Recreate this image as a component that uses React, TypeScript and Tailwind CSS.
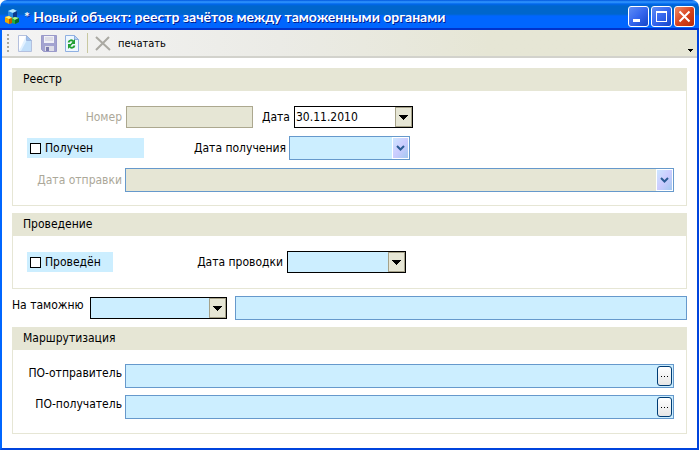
import type { ReactNode } from "react";

function AppLogo() {
  return (
    <svg width="16" height="16" viewBox="0 0 16 16" aria-hidden="true">
      <path d="M4 2 9 0l4 2v6l-4 2-5-2z" fill="#2a8ae0" />
      <path d="M4 2 9 0l4 2-4 2z" fill="#b4e8ff" />
      <path d="M9 4l4-2v6l-4 2z" fill="#0b3a8c" />
      <path d="M1 8l4-1 3 2v5l-3 1-4-2z" fill="#f0a800" />
      <path d="M1 8l4-1 3 2-3 1z" fill="#fff27a" />
      <path d="M5 10l3-1v5l-3 1z" fill="#c45a00" />
      <path d="M8 9l3-1 4 1v4l-4 2-3-1z" fill="#23b040" />
      <path d="M8 9l3-1 4 1-4 2z" fill="#a8f498" />
      <path d="M11 11l4-2v4l-4 2z" fill="#0b6a2a" />
    </svg>
  );
}

function NewIcon() {
  return (
    <svg width="14" height="17" viewBox="0 0 14 17" aria-hidden="true">
      <path d="M.5.5h8l5 5v11H.5z" fill="#e2f1ff" stroke="#b4c0de" />
      <path d="M9 5 13 6v10H3z" fill="#c2dffa" />
      <path d="M1 1h7L3 12 1 15z" fill="#fff" />
      <path d="M8.500 .5v5h5z" fill="#9cc0ee" stroke="#9fb6dd" />
    </svg>
  );
}

function SaveIcon() {
  return (
    <svg width="16" height="17" viewBox="0 0 16 17" aria-hidden="true">
      <path d="M.5.5h15v16h-13l-2-2z" fill="#a3a3d0" stroke="#9a9aca" />
      <path d="M3 1h10v7H3z" fill="#f1f1f7" />
      <path d="M4 3h8M4 5h8" stroke="#c9c9d6" />
      <path d="M4 11h9v5H4z" fill="#dedee8" />
      <path d="M5 12h3v4H5z" fill="#7c7cae" />
    </svg>
  );
}

function RefreshIcon() {
  return (
    <svg width="14" height="17" viewBox="0 0 14 17" aria-hidden="true">
      <path d="M.5.5h9l4 4v12H.5z" fill="#eef7ff" stroke="#8fb0e2" />
      <path d="M9.500 .5v4h4z" fill="#b8d4f4" stroke="#8fb0e2" />
      <path d="M3.500 7.500C4 5 7 4.500 8.500 6.500M9.500 10.500C9 13 6 13.500 4.500 11.500" stroke="#22a034" strokeWidth="1.800" fill="none" />
      <path d="M10 4v5H5.500zM3 14V9h4.500z" fill="#22a034" />
    </svg>
  );
}

function DeleteIcon() {
  return (
    <svg width="16" height="15" viewBox="0 0 16 15" aria-hidden="true">
      <path d="M1 1l14 13M14 1 1 14" stroke="#aaa9a2" strokeWidth="2" fill="none" />
    </svg>
  );
}

function DownTriangle() {
  return (
    <svg width="9" height="5" viewBox="0 0 9 5" shapeRendering="crispEdges" aria-hidden="true">
      <path d="M0 0h9v1H8v1H7v1H6v1H5v1H4V4H3V3H2V2H1V1H0z" fill="#000" />
    </svg>
  );
}

function WindowButton({ label, danger, children }: { label: string; danger?: boolean; children: ReactNode }) {
  return (
    <button
      type="button"
      aria-label={label}
      className={`flex size-[21px] items-center justify-center rounded-[3px] border border-white ${
        danger
          ? "bg-linear-to-br from-[#ee8a66] via-[#d9431c] to-[#b82c08]"
          : "bg-linear-to-br from-[#5f8cf5] via-[#3566ee] to-[#1445c8]"
      }`}
    >
      <svg width="19" height="19" viewBox="0 0 19 19" fill="none" aria-hidden="true">
        {children}
      </svg>
    </button>
  );
}

type ComboProps = {
  id: string;
  width: string;
  value?: string;
  variant: "classic" | "themed";
  fill: string;
  disabled?: boolean;
};

function Combo({ id, width, value = "", variant, fill, disabled }: ComboProps) {
  const classic = variant === "classic";
  return (
    <div className={`relative ${width}`}>
      <select
        id={id}
        disabled={disabled}
        defaultValue={value}
        className={`block w-full appearance-none rounded-none border pl-px text-black opacity-100 outline-none ${fill} ${
          classic ? "h-[22px] border-black" : "h-6 border-[#6699cc]"
        }`}
      >
        <option value={value}>{value}</option>
      </select>
      {classic ? (
        <span className="pointer-events-none absolute inset-y-px right-px flex w-[17px] items-center justify-center border border-[#a5a188] bg-[#e6e6d5]">
          <DownTriangle />
        </span>
      ) : (
        <span className="pointer-events-none absolute inset-y-px right-px flex w-[17px] items-center justify-center border border-white bg-linear-to-br from-[#cce6ff] via-[#ccccff] to-[#a3c8f0]">
          <svg width="9" height="6" viewBox="0 0 9 6" aria-hidden="true">
            <path d="M1 1l3.500 3.500L8 1" fill="none" stroke="#2b5c94" strokeWidth="2" />
          </svg>
        </span>
      )}
    </div>
  );
}

function Panel({ title, body, children }: { title: string; body: string; children: ReactNode }) {
  return (
    <section>
      <h2 className="h-[23px] bg-[#e6e6d5] pl-[11px] leading-[23px]">{title}</h2>
      <div className={`flex flex-col border border-t-0 border-[#e6e6d5] pr-3 ${body}`}>{children}</div>
    </section>
  );
}

function CheckField({ label, width }: { label: string; width: string }) {
  return (
    <label className={`ml-[14px] flex h-5 items-center gap-1 bg-[#cceeff] pl-[3px] ${width}`}>
      <input type="checkbox" className="size-[11px] appearance-none border border-black bg-white checked:bg-black" />
      {label}
    </label>
  );
}

function LookupField({ id, label }: { id: string; label: string }) {
  return (
    <div className="flex">
      <label htmlFor={id} className="w-[112px] shrink-0 pr-[3px] text-right leading-[18px]">
        {label}
      </label>
      <div className="flex h-6 min-w-0 flex-1 items-center border border-[#6699cc] bg-[#cceeff] pr-px">
        <input id={id} type="text" className="h-full min-w-0 flex-1 bg-transparent px-1 outline-none" />
        <button
          type="button"
          aria-label={`Выбрать: ${label}`}
          className="flex h-5 w-[15px] items-center justify-center rounded-[3px] border border-[#003c74] bg-linear-to-b from-white to-[#e6e6e6]"
        >
          <svg width="7" height="1" viewBox="0 0 7 1" shapeRendering="crispEdges" aria-hidden="true">
            <path d="M0 0h1v1H0zM3 0h1v1H3zM6 0h1v1H6z" fill="#000" />
          </svg>
        </button>
      </div>
    </div>
  );
}

export default function App() {
  return (
    <div className="flex min-h-screen flex-col bg-white font-['DejaVu_Sans_Condensed','DejaVu_Sans',sans-serif] text-[12px] text-black">
      <header className="flex h-[30px] items-center rounded-t-[7px] bg-[linear-gradient(#0055dd_0px,#3399ff_2px,#0066ee_4px,#0066cc_6px,#0066cc_14px,#0066ff_16px,#0066ff_28px,#0033cc_28px)] pt-[3px] pr-1 pl-1">
        <AppLogo />
        <h1 className="min-w-0 flex-1 truncate pl-1 font-[Lato,'Noto_Sans',sans-serif] text-[14px] font-bold text-white [text-shadow:1px_1px_0_#002090]">
          * Новый объект: реестр зачётов между таможенными органами
        </h1>
        <div className="flex gap-[2px]">
          <WindowButton label="Свернуть">
            <path d="M4 12h7v3H4z" fill="#fff" />
          </WindowButton>
          <WindowButton label="Развернуть">
            <path d="M4 4h11v11H4z M5 6v8h9V6z" fill="#fff" fillRule="evenodd" />
          </WindowButton>
          <WindowButton label="Закрыть" danger>
            <path d="M4.500 4.500l10 10M14.500 4.500l-10 10" stroke="#fff" strokeWidth="2" />
          </WindowButton>
        </div>
      </header>

      <div className="flex flex-1 flex-col border-x-2 border-b-2 border-l-[#0066ff] border-r-[#0044dd] border-b-[#0044dd]">
        <div
          role="toolbar"
          className="flex h-7 items-center border-b-2 border-[#d2d2cc] bg-linear-to-r from-[#f4f4f4] via-[#ebebe6] via-40% to-[#e6e6d5] to-70% pr-1 pl-[5px]"
        >
          <svg width="2" height="18" viewBox="0 0 2 18" className="mr-[9px]" shapeRendering="crispEdges" aria-hidden="true">
            <path d="M1 0v18" stroke="#a8a89c" strokeWidth="2" strokeDasharray="2 2" />
          </svg>
          <button type="button" aria-label="Создать" className="mr-[9px]">
            <NewIcon />
          </button>
          <button type="button" aria-label="Сохранить" className="mr-2">
            <SaveIcon />
          </button>
          <button type="button" aria-label="Обновить">
            <RefreshIcon />
          </button>
          <span className="mr-[7px] ml-2 h-5 w-px bg-[#c8c8a0]" />
          <button type="button" aria-label="Удалить" className="mr-[7px]">
            <DeleteIcon />
          </button>
          <button type="button" className="pt-[3px] text-[11px]">
            печатать
          </button>
          <button type="button" aria-label="Параметры панели" className="ml-auto self-end pb-1">
            <svg width="5" height="3" viewBox="0 0 5 3" shapeRendering="crispEdges" aria-hidden="true">
              <path d="M0 0h5v1H4v1H3v1H2V2H1V1H0z" fill="#000" />
            </svg>
          </button>
        </div>

        <main className="flex flex-col gap-[7px] px-[10px] pt-[10px] pb-[14px]">
          <Panel title="Реестр" body="gap-2 pt-[15px] pb-[13px]">
            <div className="flex items-center">
              <label htmlFor="number" className="w-[113px] pr-1 text-right text-[#aca899]">
                Номер
              </label>
              <input
                id="number"
                type="text"
                disabled
                className="h-[22px] w-[127px] border border-[#aca88f] bg-[#e6e6d5] px-1"
              />
              <label htmlFor="date" className="w-[41px] pr-1 text-right">
                Дата
              </label>
              <Combo id="date" width="w-[119px]" value="30.11.2010" variant="classic" fill="bg-white" />
            </div>
            <div className="flex items-center">
              <CheckField label="Получен" width="w-[117px]" />
              <label htmlFor="received" className="w-[145px] pr-[3px] text-right">
                Дата получения
              </label>
              <Combo id="received" width="w-[121px]" variant="themed" fill="bg-[#cceeff]" />
            </div>
            <div className="flex items-center">
              <label htmlFor="sent" className="w-[112px] shrink-0 pr-[3px] text-right text-[#aca899]">
                Дата отправки
              </label>
              <Combo id="sent" width="min-w-0 flex-1" variant="themed" fill="bg-[#e6e6d5]" disabled />
            </div>
          </Panel>

          <Panel title="Проведение" body="pt-[15px] pb-[15px]">
            <div className="flex items-center">
              <CheckField label="Проведён" width="w-[86px]" />
              <label htmlFor="posted" className="w-[174px] pr-1 text-right">
                Дата проводки
              </label>
              <Combo id="posted" width="w-[119px]" variant="classic" fill="bg-[#cceeff]" />
            </div>
          </Panel>

          <div className="flex items-center">
            <label htmlFor="customs" className="w-[78px] shrink-0 self-start leading-[18px] whitespace-nowrap">
              На таможню
            </label>
            <Combo id="customs" width="w-[137px]" variant="classic" fill="bg-[#cceeff]" />
            <input
              type="text"
              aria-label="Название таможни"
              className="ml-2 h-6 min-w-0 flex-1 border border-[#6699cc] bg-[#cceeff] px-1 outline-none"
            />
          </div>

          <Panel title="Маршрутизация" body="gap-[7px] pt-[14px] pb-[14px]">
            <LookupField id="sender" label="ПО-отправитель" />
            <LookupField id="recipient" label="ПО-получатель" />
          </Panel>
        </main>
      </div>
    </div>
  );
}
